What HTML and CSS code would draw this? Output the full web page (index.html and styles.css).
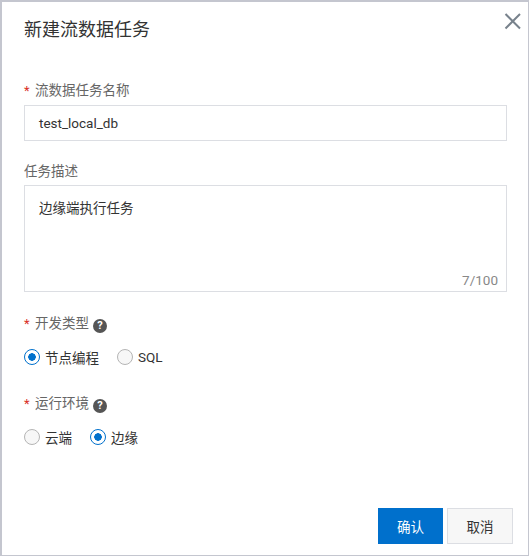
FILE: index.html
```html
<!DOCTYPE html>
<html lang="zh-CN">
<head>
    <meta charset="UTF-8">
    <title>新建流数据任务</title>
    <link rel="stylesheet" href="styles.css">
</head>
<body>
    <div class="dialog">
        <div class="dialog-header">
            <h2 class="dialog-title">新建流数据任务</h2>
            <span class="dialog-close">
                <svg width="18" height="18" viewBox="0 0 18 18"><path d="M1.5 2L16 16.5M16 2L1.5 16.5" fill="none" stroke="#78828c" stroke-width="2"/></svg>
            </span>
        </div>

        <div class="dialog-body">
            <div class="form-item item-name">
                <label class="form-label"><span class="required">*</span>流数据任务名称</label>
                <div class="text-input">test_local_db</div>
            </div>

            <div class="form-item item-desc">
                <label class="form-label">任务描述</label>
                <div class="text-area">
                    <div>边缘端执行任务</div>
                    <span class="counter">7/100</span>
                </div>
            </div>

            <div class="form-item item-type">
                <label class="form-label"><span class="required">*</span>开发类型<span class="help">?</span></label>
                <div class="radio-group">
                    <span class="radio checked">节点编程</span>
                    <span class="radio">SQL</span>
                </div>
            </div>

            <div class="form-item item-env">
                <label class="form-label"><span class="required">*</span>运行环境<span class="help">?</span></label>
                <div class="radio-group">
                    <span class="radio">云端</span>
                    <span class="radio checked">边缘</span>
                </div>
            </div>
        </div>

        <div class="dialog-footer">
            <button class="btn btn-primary">确认</button>
            <button class="btn">取消</button>
        </div>
    </div>
</body>
</html>
```

FILE: styles.css
```css
* {
    margin: 0;
    padding: 0;
    box-sizing: border-box;
    font-family: Roboto, "Noto Sans CJK SC", sans-serif;
}

body {
    background-color: #fff;
}

.dialog {
    width: 529px;
    height: 556px;
    border: 1px solid #c4c6cf;
    border-width: 2px 1px 1px 2px;
    background: #fff;
    display: flex;
    flex-direction: column;
    color: #333;
}

/* Header */
.dialog-header {
    display: flex;
    justify-content: space-between;
    padding: 13px 6px 0 22px;
    height: 64px;
}

.dialog-title {
    font-size: 18px;
    font-weight: normal;
    line-height: 30px;
}

.dialog-close {
    display: block;
    height: 18px;
    margin-top: -3px;
}

/* Form */
.dialog-body {
    flex: 1;
    padding: 13px 21px 0 22px;
}

.form-label {
    display: block;
    height: 22px;
    font-size: 13.5px;
    line-height: 22px;
    color: #666;
}

.required {
    display: inline-block;
    width: 11px;
    font-size: 13px;
    color: #d93026;
}

.text-input, .text-area {
    border: 1px solid #dcdee3;
    font-size: 13.5px;
    color: #333;
    margin-top: 4px;
}

.text-input {
    height: 36px;
    line-height: 34px;
    padding-left: 14px;
}

.text-area {
    position: relative;
    height: 107px;
    margin-top: 3px;
    padding: 11px 14px;
    line-height: 22px;
}

.counter {
    position: absolute;
    right: 8px;
    bottom: 0;
    color: #888;
}

.item-desc {
    margin-top: 19px;
}

.item-type {
    margin-top: 20px;
}

.item-env {
    margin-top: 24px;
}

.help {
    display: inline-block;
    width: 14px;
    height: 14px;
    margin-left: 4px;
    border-radius: 50%;
    background: #555;
    color: #fff;
    font-size: 11px;
    font-weight: bold;
    line-height: 14px;
    text-align: center;
    vertical-align: -1px;
}

.radio-group {
    display: flex;
    gap: 18px;
    margin-top: 12px;
    height: 22px;
}

.radio {
    display: flex;
    align-items: center;
    font-size: 13.5px;
    color: #333;
}

.radio::before {
    content: '';
    box-sizing: border-box;
    width: 16px;
    height: 16px;
    margin-right: 5px;
    border: 1px solid #b5b5b5;
    border-radius: 50%;
    background: #f7f7f7;
}

.radio.checked::before {
    border-color: #0070cc;
    background: radial-gradient(circle, #0070cc 0 3.5px, #fff 4px);
}

/* Footer */
.dialog-footer {
    display: flex;
    justify-content: flex-end;
    gap: 4px;
    padding: 0 15px 11px 0;
}

.btn {
    width: 66px;
    height: 36px;
    border: 1px solid #dcdee3;
    background: #f7f7f7;
    color: #333;
    font-size: 13.5px;
}

.btn-primary {
    width: 65px;
    border-color: #0070cc;
    background: #0070cc;
    color: #fff;
}
```
